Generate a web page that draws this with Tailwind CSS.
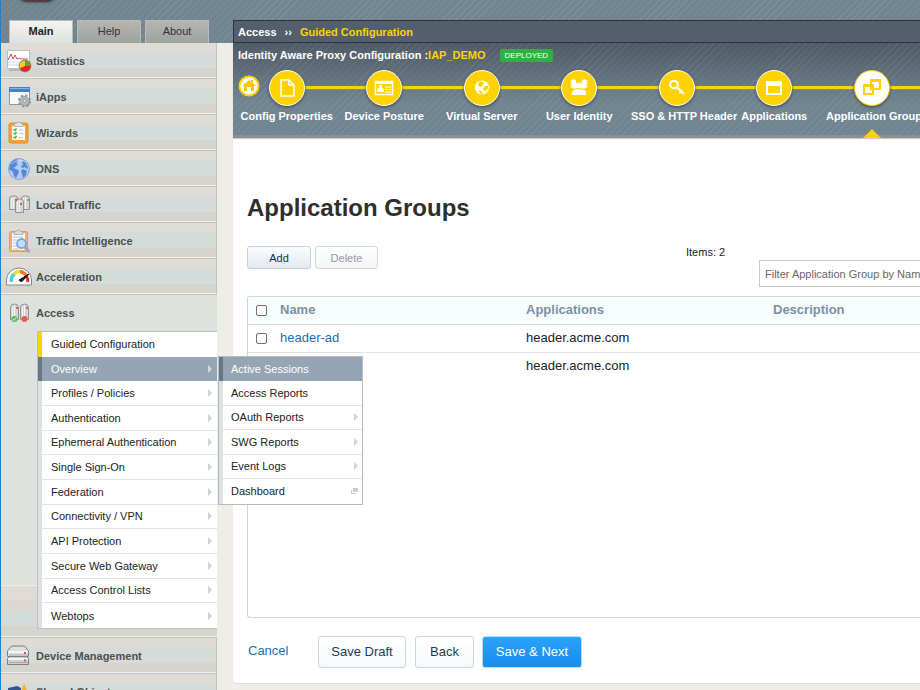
<!DOCTYPE html>
<html lang="en">
<head>
<meta charset="utf-8">
<title>Application Groups</title>
<script src="https://cdn.jsdelivr.net/npm/@tailwindcss/browser@4"></script>
</head>
<body class="bg-[#eeeee6]">
<div class="h-screen overflow-hidden border-l border-[#1a82d2] font-['Liberation_Sans',Arial,sans-serif] text-[11px] leading-4 text-[#333]">

  <header class="relative flex h-[43px] items-end overflow-hidden bg-[#718492] bg-[repeating-linear-gradient(135deg,rgba(255,255,255,0.08)_0px,rgba(255,255,255,0.08)_1px,transparent_1px,transparent_5px)]">
    <div class="absolute -top-4 left-[17px] h-[18px] w-[38px] rounded-full border border-[#444b50] bg-[#5f3733] shadow-[0_0_3px_#333]"></div>
    <nav class="flex w-[216px] shrink-0 gap-1 pl-2">
      <a href="#" class="h-[23px] w-16 border border-b-0 border-[#b8bcb8] bg-linear-to-b from-[#f4f4f2] to-[#dde2de] pt-[2px] text-center font-bold text-[#222]">Main</a>
      <a href="#" class="h-[23px] w-16 border border-b-0 border-[#b8bbb8] bg-linear-to-b from-[#b5b5b1] to-[#9ea39f] pt-[2px] text-center">Help</a>
      <a href="#" class="h-[23px] w-16 border border-b-0 border-[#b8bbb8] bg-linear-to-b from-[#b5b5b1] to-[#9ea39f] pt-[2px] text-center">About</a>
    </nav>
    <div class="ml-4 flex h-[23px] flex-1 items-center border border-r-0 border-[#333] bg-[#535f6d] pl-1 font-bold text-white">
      <a href="#">Access</a><span class="px-2">››</span><a href="#" class="text-[#ffd200]">Guided Configuration</a>
    </div>
  </header>

  <div class="flex">
    <aside class="w-[216px] shrink-0 text-[#4b504d]">
      <a href="#" class="flex h-9 items-center gap-1 border-r border-b border-[#bfc3c2] bg-[linear-gradient(#dfdbd5_0_9px,#d5dbd8_9px_25px,#d6d5cd_25px_34px,#f0f0ec_34px)] pl-[5px] font-bold">
        <svg class="size-[26px]" viewBox="0 0 26 26"><path d="M3 21h20v2H3z" fill="#b4b8b6"/><path d="M1.500 2.500h22v18h-22z" fill="#fff" stroke="#b9bfc3"/><path d="M2 14h21M2 17h21" stroke="#c5dcec"/><path d="M2 12l3-6 2 5 2-4 2 4 2-1 2 1h7" fill="none" stroke="#d24a4a"/><circle cx="19" cy="18" r="6" fill="#dd2430" stroke="#8a8a60" stroke-width=".7"/><path d="M19 18V12.500a5.500 5.500 0 0 1 5.500 5.500z" fill="#4cb02c"/><path d="M19 18V12.500a5.500 5.500 0 0 0-5 8z" fill="#fbc927"/></svg>Statistics</a>
      <a href="#" class="flex h-9 items-center gap-1 border-r border-b border-[#bfc3c2] bg-[linear-gradient(#dfdbd5_0_9px,#d5dbd8_9px_25px,#d6d5cd_25px_34px,#f0f0ec_34px)] pl-[5px] font-bold">
        <svg class="size-[26px]" viewBox="0 0 26 26"><path d="M3.500 3.500h20v17h-20z" fill="#f7f9fb" stroke="#8e989f"/><path d="M3 3h21v5H3z" fill="#3f83cd"/><path d="M4 4h19v1H4z" fill="#82b4e8"/><circle cx="18.500" cy="17" r="5.500" fill="none" stroke="#8c9798" stroke-width="2" stroke-dasharray="2.400 1.900"/><circle cx="18.500" cy="17" r="4.500" fill="#b3bfc0" stroke="#8e9a9b"/><circle cx="18.500" cy="17" r="1.700" fill="#dfe5e5" stroke="#8e9a9b"/></svg>iApps</a>
      <a href="#" class="flex h-9 items-center gap-1 border-r border-b border-[#bfc3c2] bg-[linear-gradient(#dfdbd5_0_9px,#d5dbd8_9px_25px,#d6d5cd_25px_34px,#f0f0ec_34px)] pl-[5px] font-bold">
        <svg class="size-[26px]" viewBox="0 0 26 26"><rect x="3" y="3" width="19" height="20" rx="2" fill="#f3a33b" stroke="#dd8c30"/><path d="M6 6h13v14H6z" fill="#f8fafb"/><path d="M8 5q0-2 3-2a1.800 1.800 0 0 1 3 0q3 0 3 2v1.500H8z" fill="#e4e6e6" stroke="#9ba0a2" stroke-width=".7"/><path d="M7.500 9.500l1.500 1 1.500-2M7.500 13l1.500 1 1.500-2M7.500 17l1.500 1 1.500-2" stroke="#4fb81d" fill="none" stroke-width="1.500"/><path d="M13 10h4M13 13.500h4M13 17.500h4" stroke="#b9cbdc"/></svg>Wizards</a>
      <a href="#" class="flex h-9 items-center gap-1 border-r border-b border-[#bfc3c2] bg-[linear-gradient(#dfdbd5_0_9px,#d5dbd8_9px_25px,#d6d5cd_25px_34px,#f0f0ec_34px)] pl-[5px] font-bold">
        <svg class="size-[26px]" viewBox="0 0 26 26"><circle cx="13" cy="13" r="10.500" fill="#aecbf5" stroke="#8aa1cc"/><path d="M4 9q2-5 7-6l1 2-2 2 2 1-3 3-2 1 3 1 3 2-1 3-2 4-2-2-1-4-4-3z" fill="#5a86d6"/><path d="M17 5l3 2 2 5-1 1-2-2-3 1-1-2 2-1-1-3zM17 13l4 2-1 4-3 3-1-4-1-3z" fill="#5a86d6"/><path d="M6 8q4-5 11-3" stroke="#e3eefc" fill="none" opacity=".6"/></svg>DNS</a>
      <a href="#" class="flex h-9 items-center gap-1 border-r border-b border-[#bfc3c2] bg-[linear-gradient(#dfdbd5_0_9px,#d5dbd8_9px_25px,#d6d5cd_25px_34px,#f0f0ec_34px)] pl-[5px] font-bold">
        <svg class="size-[26px]" viewBox="0 0 26 26" fill="#d4d6d4" stroke="#8f928f"><path d="M3.500 17.500V7q0-3 3-3h3q2 0 2 3v10.500zM15.500 17.500V7q0-3 3-3h3q2 0 2 3v10.500z"/><path d="M5.500 6v11M7.500 5v12M19.500 5v12M17.500 5v12" stroke="#f1f1ef"/><path d="M9.500 20.500V10q0-3 3-3h2q3 0 3 3v10.500z"/><path d="M11.500 9v11M13.500 8v12" stroke="#f1f1ef"/><path d="M9 8h2M14 12h2" stroke="#ed2024" stroke-width="1.500"/><path d="M21 8h2" stroke="#42b53c" stroke-width="1.500"/></svg>Local Traffic</a>
      <a href="#" class="flex h-9 items-center gap-1 border-r border-b border-[#bfc3c2] bg-[linear-gradient(#dfdbd5_0_9px,#d5dbd8_9px_25px,#d6d5cd_25px_34px,#f0f0ec_34px)] pl-[5px] font-bold">
        <svg class="size-[26px]" viewBox="0 0 26 26"><rect x="3.500" y="3.500" width="18" height="20" rx="1" fill="#edb267" stroke="#e3a04c"/><path d="M6 5h13v17H6z" fill="#f8fafb"/><path d="M8 5q0-2 3-2a1.800 1.800 0 0 1 3 0q3 0 3 2v1.500H8z" fill="#d9dedf" stroke="#929c9f" stroke-width=".7"/><path d="M7 9h10M7 12h4M7 15h3M7 18h4M7 21h6" stroke="#b8c5d0"/><path d="M18.500 19l5 5" stroke="#9aa7b3" stroke-width="3"/><circle cx="15.500" cy="15.500" r="4.500" fill="#c6dffa" stroke="#78a5d8" stroke-width="1.800"/></svg>Traffic Intelligence</a>
      <a href="#" class="flex h-9 items-center gap-1 border-r border-b border-[#bfc3c2] bg-[linear-gradient(#dfdbd5_0_9px,#d5dbd8_9px_25px,#d6d5cd_25px_34px,#f0f0ec_34px)] pl-[5px] font-bold">
        <svg class="size-[26px]" viewBox="0 0 26 26"><path d="M.5 21v-5a12.500 12 0 0 1 25 0v5z" fill="#fff" stroke="#7f8584"/><path d="M5.500 18q-1-5 3-8" fill="none" stroke="#4cd0d9" stroke-width="3.500"/><path d="M8 10q3-3 6-2.500" fill="none" stroke="#f2de24" stroke-width="3.500"/><path d="M14 7.500q4 .5 6.500 4.500" fill="none" stroke="#f17a29" stroke-width="3.500"/><path d="M20.500 12q2 3 1 6" fill="none" stroke="#e12b28" stroke-width="3"/><path d="M13 16l10-6-7 7.500a3 2 0 0 1-3-1.500z" fill="#161616" stroke="#161616"/></svg>Acceleration</a>

      <section class="border-b border-[#bfc3c2] bg-[linear-gradient(#dfdbd5_0_14px,#ddd7d2_14px_24px,#d5dbd8_24px_40px,#d6d5cd_40px_50px,#f0f0ec_50px)] bg-[length:100%_51px] bg-bottom bg-no-repeat">
        <div class="bg-[linear-gradient(#dde2de,#dde2de)] bg-[length:100%_290px] bg-no-repeat pb-2">
          <a href="#" class="flex h-9 items-center gap-1 pl-[5px] font-bold">
            <svg class="size-[26px]" viewBox="0 0 26 26" fill="#d4d6d4" stroke="#8f928f"><path d="M4.500 19.500V8q0-4 4-4t4 4v11.500zM14.500 19.500V8q0-4 4-4t4 4v11.500z"/><path d="M6.500 6v12M8.500 5v13M16.500 6v12M18.500 5v13" stroke="#f3f3f1"/><path d="M10 8h2M20 8h2" stroke="#ee3b38" stroke-width="1.500"/><circle cx="8.500" cy="19" r="3" fill="#62b857" stroke="none"/><circle cx="18.500" cy="19" r="3" fill="#ef5a50" stroke="none"/><path d="M7 19l1 1.500 2-3" fill="none" stroke="#d8f0d4"/></svg>Access</a>
          <ul class="ml-9 grid h-[298px] grid-rows-12 border-y border-l border-[#bbbfbf] text-[#222]">
            <li class="flex items-center border-l-4 border-[#ffd200] bg-white pl-[9px]"><a href="#">Guided Configuration</a></li>
            <li class="relative z-10 flex items-center justify-between border-l-4 border-[#657889] bg-[#95a5b5] pr-[5px] pl-[9px] text-white"><a href="#">Overview</a><span class="border-y-4 border-l-4 border-y-transparent border-l-[#d6d8d8]"></span>
              <ul class="absolute -top-px left-full ml-px grid h-[149px] w-[145px] grid-rows-6 border border-[#b7bbbb] text-[#222]">
                <li class="flex items-center border-l-4 border-[#657889] bg-[#95a5b5] pl-2 text-white"><a href="#">Active Sessions</a></li>
                <li class="flex items-center border-b border-l-4 border-b-[#e0e4e2] border-l-[#dde2de] bg-white pl-2"><a href="#">Access Reports</a></li>
                <li class="flex items-center justify-between border-b border-l-4 border-b-[#e0e4e2] border-l-[#dde2de] bg-white pr-1 pl-2"><a href="#">OAuth Reports</a><span class="border-y-4 border-l-4 border-y-transparent border-l-[#cfd3d2]"></span></li>
                <li class="flex items-center justify-between border-b border-l-4 border-b-[#e0e4e2] border-l-[#dde2de] bg-white pr-1 pl-2"><a href="#">SWG Reports</a><span class="border-y-4 border-l-4 border-y-transparent border-l-[#cfd3d2]"></span></li>
                <li class="flex items-center justify-between border-b border-l-4 border-b-[#e0e4e2] border-l-[#dde2de] bg-white pr-1 pl-2"><a href="#">Event Logs</a><span class="border-y-4 border-l-4 border-y-transparent border-l-[#cfd3d2]"></span></li>
                <li class="flex items-center justify-between border-l-4 border-[#dde2de] bg-white pr-1 pl-2"><a href="#">Dashboard</a><svg class="h-[6px] w-[7px]" viewBox="0 0 7 6"><path d="M2 0h5v4H2z" fill="#c9cecd"/><path d="M0 2h1v3h4v1H0z" fill="#c9cecd"/></svg></li>
              </ul>
            </li>
            <li class="flex items-center justify-between border-b border-l-4 border-b-[#e0e4e2] border-l-[#dde2de] bg-white pr-[5px] pl-[9px]"><a href="#">Profiles / Policies</a><span class="border-y-4 border-l-4 border-y-transparent border-l-[#cfd3d2]"></span></li>
            <li class="flex items-center justify-between border-b border-l-4 border-b-[#e0e4e2] border-l-[#dde2de] bg-white pr-[5px] pl-[9px]"><a href="#">Authentication</a><span class="border-y-4 border-l-4 border-y-transparent border-l-[#cfd3d2]"></span></li>
            <li class="flex items-center justify-between border-b border-l-4 border-b-[#e0e4e2] border-l-[#dde2de] bg-white pr-[5px] pl-[9px]"><a href="#">Ephemeral Authentication</a><span class="border-y-4 border-l-4 border-y-transparent border-l-[#cfd3d2]"></span></li>
            <li class="flex items-center justify-between border-b border-l-4 border-b-[#e0e4e2] border-l-[#dde2de] bg-white pr-[5px] pl-[9px]"><a href="#">Single Sign-On</a><span class="border-y-4 border-l-4 border-y-transparent border-l-[#cfd3d2]"></span></li>
            <li class="flex items-center justify-between border-b border-l-4 border-b-[#e0e4e2] border-l-[#dde2de] bg-white pr-[5px] pl-[9px]"><a href="#">Federation</a><span class="border-y-4 border-l-4 border-y-transparent border-l-[#cfd3d2]"></span></li>
            <li class="flex items-center justify-between border-b border-l-4 border-b-[#e0e4e2] border-l-[#dde2de] bg-white pr-[5px] pl-[9px]"><a href="#">Connectivity / VPN</a><span class="border-y-4 border-l-4 border-y-transparent border-l-[#cfd3d2]"></span></li>
            <li class="flex items-center justify-between border-b border-l-4 border-b-[#e0e4e2] border-l-[#dde2de] bg-white pr-[5px] pl-[9px]"><a href="#">API Protection</a><span class="border-y-4 border-l-4 border-y-transparent border-l-[#cfd3d2]"></span></li>
            <li class="flex items-center justify-between border-b border-l-4 border-b-[#e0e4e2] border-l-[#dde2de] bg-white pr-[5px] pl-[9px]"><a href="#">Secure Web Gateway</a><span class="border-y-4 border-l-4 border-y-transparent border-l-[#cfd3d2]"></span></li>
            <li class="flex items-center justify-between border-b border-l-4 border-b-[#e0e4e2] border-l-[#dde2de] bg-white pr-[5px] pl-[9px]"><a href="#">Access Control Lists</a><span class="border-y-4 border-l-4 border-y-transparent border-l-[#cfd3d2]"></span></li>
            <li class="flex items-center justify-between border-l-4 border-[#dde2de] bg-white pr-[5px] pl-[9px]"><a href="#">Webtops</a><span class="border-y-4 border-l-4 border-y-transparent border-l-[#cfd3d2]"></span></li>
          </ul>
        </div>
      </section>

      <a href="#" class="flex h-9 items-center gap-1 border-r border-b border-[#bfc3c2] bg-[linear-gradient(#dfdbd5_0_9px,#d5dbd8_9px_25px,#d6d5cd_25px_34px,#f0f0ec_34px)] pl-[5px] font-bold">
        <svg class="size-[26px]" viewBox="0 0 26 26" stroke="#7c7f7c"><path d="M1.500 8l4-5h13l4 5v5.500h-21z" fill="#dfe1df"/><path d="M1.500 15.500l2-2h17l2 2v6h-21z" fill="#cdd0ce"/><path d="M2 9h20M2 16h20" stroke="#f4f4f2" stroke-width="2"/><path d="M3 12h19M3 19.500h19" stroke="#a9acaa"/><path d="M18 10h2M18 17.500h2" stroke="#e5494a" stroke-width="2"/></svg>Device Management</a>
      <a href="#" class="flex h-9 items-center gap-1 border-r border-b border-[#bfc3c2] bg-[linear-gradient(#dfdbd5_0_9px,#d5dbd8_9px_25px,#d6d5cd_25px_34px,#f0f0ec_34px)] pl-[5px] font-bold">
        <svg class="size-[26px]" viewBox="0 0 26 26"><path d="M2 9l9-2 4 2v9l-5 2-8-3z" fill="#35538f"/><path d="M18 4l6 16H13z" fill="#f3b52c"/></svg>Shared Objects</a>
    </aside>

    <main class="ml-4 min-w-0 flex-1">
      <section class="relative border-b-[3px] border-[#8e8e8e] bg-[#718492] bg-[repeating-linear-gradient(135deg,rgba(255,255,255,0.06)_0px,rgba(255,255,255,0.06)_1px,transparent_1px,transparent_5px),linear-gradient(#4f5a65,#718492_60px)] pl-[5px] font-bold text-white shadow-[0_1px_1px_#ccc]">
        <div class="flex h-[27px] items-center pb-[3px]">
          <span>Identity Aware Proxy Configuration :</span><span class="text-[#ffd200]">IAP_DEMO</span>
          <span class="ml-[14px] rounded-[2px] bg-[#2fb043] px-[5px] text-[8px] leading-[13px] font-normal">DEPLOYED</span>
        </div>
        <a href="#" aria-label="Home" class="absolute top-8 left-[5px]">
          <svg class="size-[22px]" viewBox="0 0 22 22"><circle cx="11" cy="11" r="9.500" fill="#fff" stroke="#ffd200" stroke-width="2"/><path d="M4 11l7-6 2 2V5h2v3l3 3h-2v5h-3v-4H9v4H6v-5z" fill="#f5c800"/></svg>
        </a>
        <ol class="grid h-[65px] w-[780px] grid-cols-8 text-center whitespace-nowrap">
          <li class="relative flex flex-col items-center gap-[2px]">
            <span class="absolute top-4 left-1/2 h-1 w-full border-b border-[#8d8b6a] bg-[#ffd200]"></span>
            <span class="relative flex size-9 items-center justify-center rounded-full border border-white bg-[#ffd200] shadow-[0_1px_3px_#444]"><svg class="size-5" viewBox="0 0 20 20" fill="none" stroke="#fff" stroke-width="1.500"><path d="M4 2h8l5 5v11H4zM12 2v5h5"/></svg></span>
            <a href="#">Config Properties</a></li>
          <li class="relative flex flex-col items-center gap-[2px]">
            <span class="absolute top-4 left-1/2 h-1 w-full border-b border-[#8d8b6a] bg-[#ffd200]"></span>
            <span class="relative flex size-9 items-center justify-center rounded-full border border-white bg-[#ffd200] shadow-[0_1px_3px_#444]"><svg class="size-5" viewBox="0 0 20 20"><path d="M1.500 3.500h17v13h-17z" fill="none" stroke="#fff" stroke-width="1.500"/><path d="M1 3h18v3H1zM3 14v-3l2-1V7h3v3l2 1v3z" fill="#fff"/><path d="M11 9h6M11 11.500h3m1 0h2M11 14h6" stroke="#fff"/></svg></span>
            <a href="#">Device Posture</a></li>
          <li class="relative flex flex-col items-center gap-[2px]">
            <span class="absolute top-4 left-1/2 h-1 w-full border-b border-[#8d8b6a] bg-[#ffd200]"></span>
            <span class="relative flex size-9 items-center justify-center rounded-full border border-white bg-[#ffd200] shadow-[0_1px_3px_#444]"><svg class="size-5" viewBox="0 0 20 20"><circle cx="10" cy="9.500" r="7" fill="#fff"/><path d="M8 3.500l3 .5 1 2-3 3-3-1 0-2zM12 8.500l4-1v3l-3 3-2-2zM6 12l3 1 2 2-2 1z" fill="#ffd200"/></svg></span>
            <a href="#">Virtual Server</a></li>
          <li class="relative flex flex-col items-center gap-[2px]">
            <span class="absolute top-4 left-1/2 h-1 w-full border-b border-[#8d8b6a] bg-[#ffd200]"></span>
            <span class="relative flex size-9 items-center justify-center rounded-full border border-white bg-[#ffd200] shadow-[0_1px_3px_#444]"><svg class="size-5" viewBox="0 0 20 20" fill="#fff"><circle cx="4.500" cy="4" r="2.800"/><circle cx="15.500" cy="4" r="2.800"/><path d="M1.500 9q0-3 4-3h9q4 0 4 3l-4 2h-9z"/><circle cx="10" cy="8" r="3.500"/><path d="M3 17v-2q0-3 3-3.500h8q3 .5 3 3.500v2z"/><path d="M3.500 12q3-1 4-1.500h5q1 .5 4 1.500" fill="none" stroke="#ffd200" stroke-width=".8"/></svg></span>
            <a href="#">User Identity</a></li>
          <li class="relative flex flex-col items-center gap-[2px]">
            <span class="absolute top-4 left-1/2 h-1 w-full border-b border-[#8d8b6a] bg-[#ffd200]"></span>
            <span class="relative flex size-9 items-center justify-center rounded-full border border-white bg-[#ffd200] shadow-[0_1px_3px_#444]"><svg class="size-5" viewBox="0 0 20 20" fill="none" stroke="#fff" stroke-width="2"><circle cx="7" cy="6.500" r="3.800"/><path d="M10 9l7 7M12.500 15l2.500-2.500"/></svg></span>
            <a href="#" class="self-start pl-[3px]">SSO &amp; HTTP Header</a></li>
          <li class="relative flex flex-col items-center gap-[2px]">
            <span class="absolute top-4 left-1/2 h-1 w-full border-b border-[#8d8b6a] bg-[#ffd200]"></span>
            <span class="relative flex size-9 items-center justify-center rounded-full border border-white bg-[#ffd200] shadow-[0_1px_3px_#444]"><svg class="size-5" viewBox="0 0 20 20"><path d="M3 4h14v12H3z" fill="none" stroke="#fff" stroke-width="2"/><path d="M2 3h16v5H2z" fill="#fff"/></svg></span>
            <a href="#">Applications</a></li>
          <li class="relative flex flex-col items-center gap-[2px]">
            <span class="absolute top-4 left-1/2 h-1 w-full border-b border-[#8d8b6a] bg-[#ffd200]"></span>
            <span class="relative flex size-9 items-center justify-center rounded-full border border-[#ffd200] bg-white shadow-[0_1px_3px_#444]"><svg class="size-5" viewBox="0 0 20 20" fill="#fff" stroke="#ffd200" stroke-width="2"><path d="M9 2h9v9H9zM2 7h9v9H2z"/><path d="M9 2.500h9M2 7.500h9" stroke-width="3"/></svg></span>
            <a href="#" class="self-start pl-[3px]">Application Groups</a>
            <span class="absolute top-[59px] border-x-9 border-b-9 border-x-transparent border-b-[#ffd200]"></span></li>
        </ol>
      </section>

      <section class="rounded-bl border-b border-[#dcdfe0] bg-white pt-[54px] pb-[15px] pl-[14px]">
        <h1 class="text-2xl leading-8 font-bold text-[#2e2e2e]">Application Groups</h1>
        <div class="mt-[22px] flex items-start">
          <button class="mr-1 h-[23px] w-16 shrink-0 rounded-[3px] border border-[#c6d0da] bg-linear-to-b from-[#f8fdfd] to-[#e5e9f0] text-[#222c45]">Add</button>
          <button class="h-[23px] w-[63px] shrink-0 rounded-[3px] border border-[#d3d9db] bg-linear-to-b from-[#fbffff] to-[#f4f5f7] text-[#9498ab]">Delete</button>
          <span class="ml-[308px] w-[73px] shrink-0 leading-3 text-[#222]">Items: 2</span>
          <input type="text" aria-label="Filter Application Group by Name" placeholder="Filter Application Group by Name" class="mt-[14px] h-[27px] w-[200px] shrink-0 border border-[#c8cacb] bg-white px-[5px] placeholder:text-[#666]">
        </div>
        <div class="mt-[9px] min-h-[322px] rounded-l-[3px] border border-r-0 border-[#d0d5d6]">
          <table class="w-full table-fixed text-left text-[13px] text-[#222]">
            <thead class="h-[27px] border-b border-[#d0d8d8] bg-[#f6fefe] text-[#7b8fa8]">
              <tr><th class="w-8 pl-2"><input type="checkbox" aria-label="Select all" class="block size-[11px] appearance-none rounded-[2px] border border-[#707070] bg-white"></th><th class="w-[246px]">Name</th><th class="w-[247px]">Applications</th><th>Description</th></tr>
            </thead>
            <tbody>
              <tr class="h-7 border-b border-[#dfe4e4]"><td class="pl-2"><input type="checkbox" aria-label="Select header-ad" class="block size-[11px] appearance-none rounded-[2px] border border-[#707070] bg-white"></td><td><a href="#" class="text-[#1d6fae]">header-ad</a></td><td>header.acme.com</td><td></td></tr>
              <tr class="h-7"><td></td><td></td><td>header.acme.com</td><td></td></tr>
            </tbody>
          </table>
        </div>
        <div class="mt-[18px] flex text-[13px] text-[#2c3950]">
          <a href="#" class="w-[71px] pt-[7px] pl-px text-[#1d6fae]">Cancel</a>
          <button class="mr-[9px] h-8 w-[88px] rounded-[3px] border border-[#ccd4de] bg-linear-to-b from-white to-[#f5f9fa]">Save Draft</button>
          <button class="mr-2 h-8 w-[59px] rounded-[3px] border border-[#ccd4de] bg-linear-to-b from-white to-[#f5f9fa]">Back</button>
          <button class="h-8 w-[100px] rounded-[3px] border border-[#b9dcf7] bg-linear-to-b from-[#2ba2fa] to-[#168cec] text-white">Save &amp; Next</button>
        </div>
      </section>
    </main>
  </div>
</div>
</body>
</html>
